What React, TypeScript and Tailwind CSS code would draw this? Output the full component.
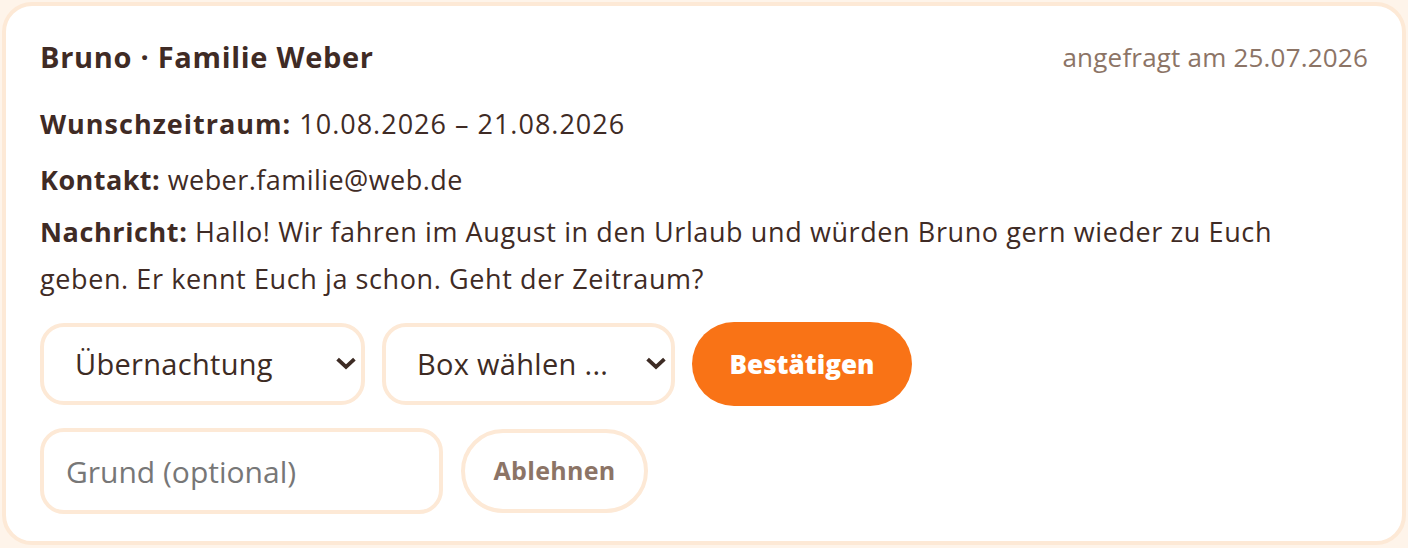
const font = { fontFamily: '"Open Sans", Lato, sans-serif' };

function Chevron() {
  return (
    <svg
      width="20"
      height="14"
      viewBox="0 0 20 14"
      className="pointer-events-none absolute right-[9px] top-1/2 -translate-y-1/2"
    >
      <path d="M3 3.5 L10 10 L17 3.5" fill="none" stroke="#3d2b24" strokeWidth="3.8" strokeLinecap="square" />
    </svg>
  );
}

function Select({ value, width }: { value: string; width: string }) {
  return (
    <div className={`relative ${width}`}>
      <select
        defaultValue={value}
        className="h-[82px] w-full appearance-none rounded-[24px] border-4 border-[#fde9d6] bg-white pl-[31px] pr-10 text-[29px] tracking-[0.3px] text-[#3d2b24] outline-none"
      >
        <option>{value}</option>
      </select>
      <Chevron />
    </div>
  );
}

export default function App() {
  return (
    <div className="min-h-screen bg-[#fef4ea] p-[2px]" style={font}>
      <div className="rounded-[30px] border-4 border-[#fde9d6] bg-white px-[34px] pb-[27px] pt-[31px] text-[#3f2b25]">
        <div className="flex items-center justify-between">
          <h2 className="text-[29px] font-bold leading-[40px] tracking-[0.7px]">Bruno · Familie Weber</h2>
          <span className="text-[26px] leading-[40px] tracking-[0.2px] text-[#8c7466]">angefragt am 25.07.2026</span>
        </div>
        <p className="mt-[27px] text-[27px] leading-[40px] tracking-[1px]">
          <span className="font-bold">Wunschzeitraum:</span> 10.08.2026 – 21.08.2026
        </p>
        <p className="mt-[16px] text-[27px] leading-[40px] tracking-[0.45px]">
          <span className="font-bold">Kontakt:</span> weber.familie@web.de
        </p>
        <p className="mt-[8px] max-w-[1250px] text-[27px] leading-[47px] tracking-[0.6px]">
          <span className="font-bold">Nachricht:</span> Hallo! Wir fahren im August in den Urlaub und würden Bruno gern
          wieder zu Euch geben. Er kennt Euch ja schon. Geht der Zeitraum?
        </p>
        <div className="mt-[20px] flex items-center gap-[17px]">
          <Select value="Übernachtung" width="w-[325px]" />
          <Select value="Box wählen ..." width="w-[293px]" />
          <button className="h-[84px] w-[220px] rounded-full bg-[#f97316] text-[26px] font-extrabold text-white">
            Bestätigen
          </button>
        </div>
        <div className="mt-[22px] flex items-center gap-[18px]">
          <input
            placeholder="Grund (optional)"
            className="h-[86px] w-[403px] rounded-[24px] border-4 border-[#fde9d6] bg-white pl-[22px] text-[30px] text-[#3f2b25] outline-none placeholder:text-[#777777]"
          />
          <button className="h-[84px] w-[187px] rounded-full border-4 border-[#fde9d6] bg-white text-[25px] font-bold tracking-[0.3px] text-[#8c7466]">
            Ablehnen
          </button>
        </div>
      </div>
    </div>
  );
}
